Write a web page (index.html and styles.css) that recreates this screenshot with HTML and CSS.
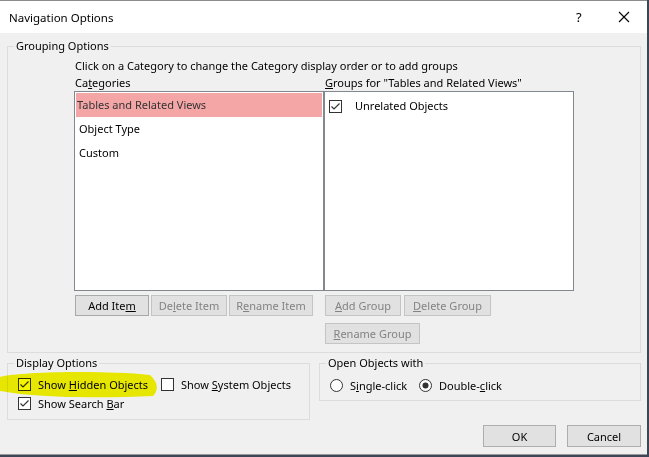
FILE: index.html
```html
<!DOCTYPE html>
<html lang="en">
<head>
  <meta charset="UTF-8" />
  <title>Navigation Options</title>
  <link rel="stylesheet" href="styles.css">
</head>
<body>

  <div class="window">
    <div class="titlebar">
      <span class="title">Navigation Options</span>
      <span class="help">?</span>
      <svg class="close" width="12" height="12" viewBox="0 0 12 12">
        <path d="M1 1 L11 11 M11 1 L1 11" stroke="#000" stroke-width="1.1" fill="none"/>
      </svg>
    </div>

    <div class="client">
      <fieldset class="group grouping">
        <legend>Grouping Options</legend>
        <div class="grouping-body">
          <div class="hint">Click on a Category to change the Category display order or to add groups</div>
          <div class="lists">
            <div class="col">
              <div class="label">Ca<u>t</u>egories</div>
              <div class="listbox">
                <div class="row selected">Tables and Related Views</div>
                <div class="row">Object Type</div>
                <div class="row">Custom</div>
              </div>
              <div class="btns">
                <button class="btn w73 default">Add Ite<u>m</u></button>
                <button class="btn w75" disabled>De<u>l</u>ete Item</button>
                <button class="btn w84" disabled>R<u>e</u>name Item</button>
              </div>
            </div>
            <div class="col">
              <div class="label"><u>G</u>roups for "Tables and Related Views"</div>
              <div class="listbox">
                <div class="row check-row">
                  <svg class="box" width="13" height="13" viewBox="0 0 13 13">
                    <rect x="0.5" y="0.5" width="12" height="12" fill="#fff" stroke="#333"/>
                    <path d="M2.5 6.5 L5 9 L10.5 3.5" stroke="#333" stroke-width="1.2" fill="none"/>
                  </svg>
                  <span>Unrelated Objects</span>
                </div>
              </div>
              <div class="btns group-btns">
                <button class="btn w75" disabled><u>A</u>dd Group</button>
                <button class="btn w86" disabled><u>D</u>elete Group</button>
                <button class="btn w95" disabled><u>R</u>ename Group</button>
              </div>
            </div>
          </div>
        </div>
      </fieldset>

      <div class="lower">
        <fieldset class="group display">
          <legend>Display Options</legend>
          <div class="display-body">
            <div class="opt-row">
              <label class="opt first">
                <svg class="box" width="13" height="13" viewBox="0 0 13 13">
                  <rect x="0.5" y="0.5" width="12" height="12" fill="#fff" stroke="#333"/>
                  <path d="M2.5 6.5 L5 9 L10.5 3.5" stroke="#333" stroke-width="1.2" fill="none"/>
                </svg>
                <span>Show <u>H</u>idden Objects</span>
              </label>
              <label class="opt">
                <svg class="box" width="13" height="13" viewBox="0 0 13 13">
                  <rect x="0.5" y="0.5" width="12" height="12" fill="#fff" stroke="#333"/>
                </svg>
                <span>Show <u>S</u>ystem Objects</span>
              </label>
            </div>
            <div class="opt-row">
              <label class="opt">
                <svg class="box" width="13" height="13" viewBox="0 0 13 13">
                  <rect x="0.5" y="0.5" width="12" height="12" fill="#fff" stroke="#333"/>
                  <path d="M2.5 6.5 L5 9 L10.5 3.5" stroke="#333" stroke-width="1.2" fill="none"/>
                </svg>
                <span>Show Search <u>B</u>ar</span>
              </label>
            </div>
          </div>
          <!-- highlighter mark drawn over the first option -->
          <svg class="marker" width="160" height="30" viewBox="0 372 160 30">
            <path d="M0 377 C20 372 100 370 150 375 Q162 386 153 396 C110 398 60 398 20 394 L0 391 Z" fill="#f5f500"/>
          </svg>
        </fieldset>

        <div class="right">
          <fieldset class="group open">
            <legend>Open Objects with</legend>
            <div class="open-body">
              <div class="opt-row">
                <label class="opt radio-first">
                  <svg class="box" width="13" height="13" viewBox="0 0 13 13">
                    <circle cx="6.5" cy="6.5" r="6" fill="#fff" stroke="#333"/>
                  </svg>
                  <span>S<u>i</u>ngle-click</span>
                </label>
                <label class="opt">
                  <svg class="box" width="13" height="13" viewBox="0 0 13 13">
                    <circle cx="6.5" cy="6.5" r="6" fill="#fff" stroke="#333"/>
                    <circle cx="6.5" cy="6.5" r="3" fill="#333"/>
                  </svg>
                  <span>Double-<u>c</u>lick</span>
                </label>
              </div>
            </div>
          </fieldset>
          <div class="dialog-btns">
            <button class="btn big">OK</button>
            <button class="btn big">Cancel</button>
          </div>
        </div>
      </div>
    </div>
  </div>

</body>
</html>
```

FILE: styles.css
```css
body {
  margin: 0;
  background: #3d4656;
  font-family: "Segoe UI", "Noto Sans", Arial, sans-serif;
  font-size: 11px;
  color: #000;
}

.window {
  width: 647px;
  height: 453px;
  background: #f0f0f0;
  border-top: 1px solid #8c8c8c;
  border-bottom: 1px solid #9a9a9a;
}

.titlebar {
  height: 32px;
  background: #fff;
  display: flex;
  align-items: center;
  padding-left: 9px;
}

.title {
  flex: 1;
  font-size: 11.5px;
}

.help {
  width: 12px;
  margin-right: 30px;
  font-size: 13px;
}

.close {
  margin-right: 17px;
}

.client {
  padding: 5px 6px 0 7px;
}

.group {
  border: 1px solid #dcdcdc;
  margin: 0;
  padding: 0;
  min-width: 0;
  box-sizing: border-box;
}

.group legend {
  padding: 0 2px;
  margin-left: 6px;
  line-height: 16px;
}

.grouping {
  width: 634px;
}

.grouping-body {
  padding: 0 0 8px 66px;
}

.hint {
  margin-top: 3px;
  line-height: 17px;
  padding-left: 1px;
}

.lists {
  display: flex;
}

.col {
  width: 250px;
}

.label {
  line-height: 17px;
  padding-left: 1px;
}

.listbox {
  height: 196px;
  background: #fff;
  border: 1px solid #828790;
  padding: 1px;
  box-sizing: content-box;
  width: 246px;
}

.row {
  height: 24px;
  line-height: 24px;
  padding-left: 3px;
}

.row.selected {
  background: #f4a6a7;
  color: #333;
  padding-left: 1px;
}

.check-row {
  display: flex;
  align-items: center;
  padding-left: 3px;
  height: 22px;
  margin-top: 2px;
}

.check-row .box {
  margin-right: 13px;
}

.btns {
  display: flex;
  flex-wrap: wrap;
  gap: 7px 2px;
  margin-top: 4px;
  padding-left: 1px;
}

.group-btns {
  gap: 7px 3px;
  width: 180px;
}

.btn {
  height: 21px;
  padding: 0;
  background: #e1e1e1;
  border: 1px solid #adadad;
  font: inherit;
  color: #000;
}

.btn:disabled {
  border-color: #c4c4c4;
  color: #838383;
}

.btn.default {
  border-color: #a8a8a8;
}

.w73 { width: 74px; }
.w75 { width: 76px; }
.w84 { width: 84px; }
.w86 { width: 87px; }
.w95 { width: 95px; }

.lower {
  display: flex;
  gap: 9px;
  margin-top: 2px;
}

.display {
  position: relative;
  width: 304px;
  height: 65px;
}

.display-body {
  padding: 4px 0 5px 10px;
}

.opt-row {
  display: flex;
  height: 19px;
  align-items: center;
}

.opt {
  display: flex;
  align-items: center;
  gap: 7px;
}

.opt.first {
  width: 143px;
}

.opt.radio-first {
  width: 89px;
}

.marker {
  position: absolute;
  left: -8px;
  top: 1px;
  mix-blend-mode: multiply;
  pointer-events: none;
}

.right {
  display: flex;
  flex-direction: column;
  align-items: flex-end;
}

.open {
  width: 322px;
  height: 46px;
}

.open-body {
  padding: 5px 0 5px 10px;
}

.dialog-btns {
  display: flex;
  gap: 11px;
  margin-top: 24px;
}

.btn.big {
  width: 73px;
  height: 22px;
}

.btn.big + .btn.big {
  width: 74px;
}
```
